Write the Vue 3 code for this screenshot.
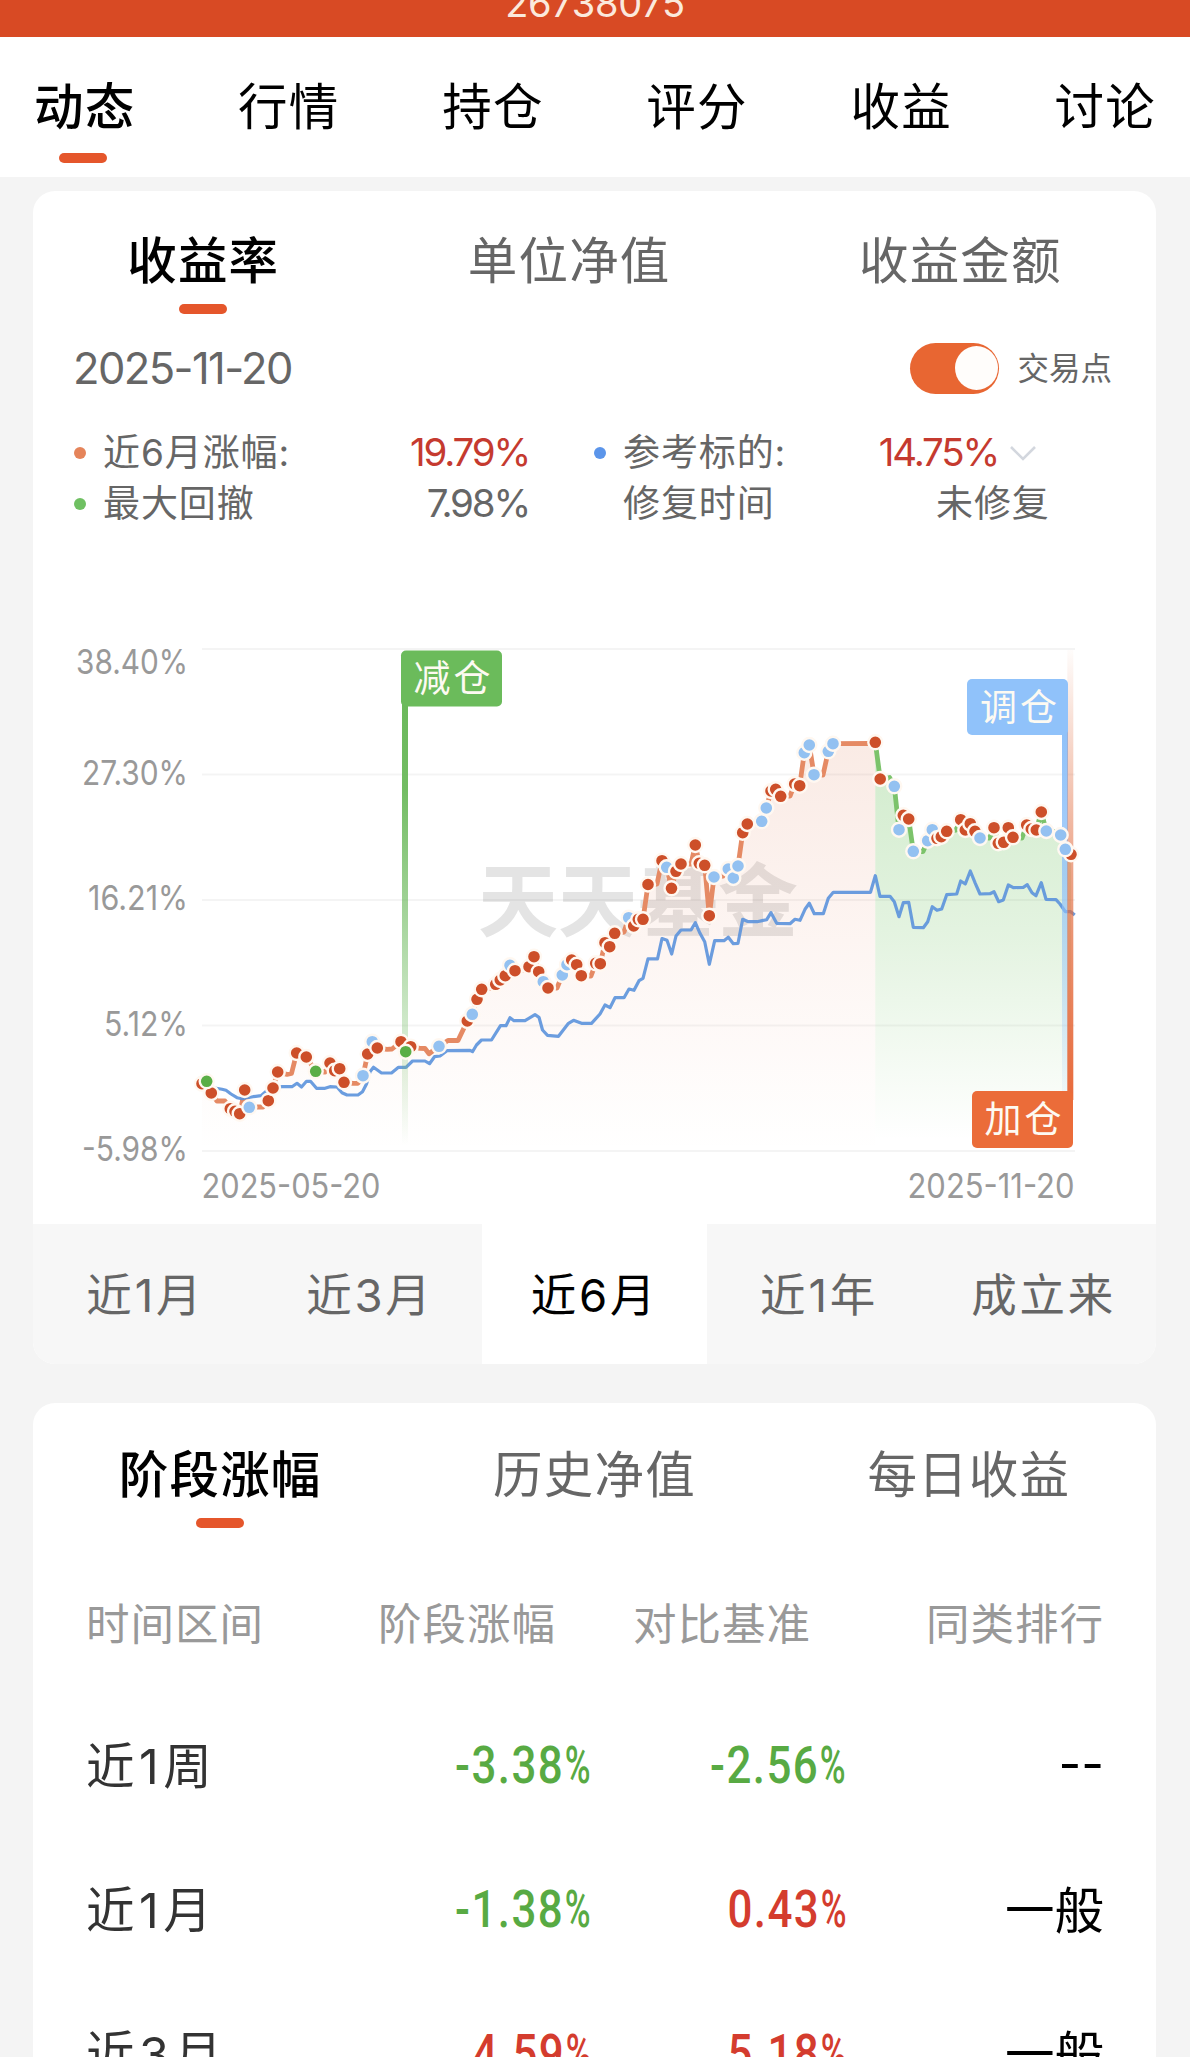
<script setup>
import { ref, computed } from 'vue';

const navItems = ['动态', '行情', '持仓', '评分', '收益', '讨论'];
const activeNav = ref(0);

const chartTabs = ['收益率', '单位净值', '收益金额'];
const activeChartTab = ref(0);

const ranges = ['近1月', '近3月', '近6月', '近1年', '成立来'];
const activeRange = ref(2);

const tableTabs = ['阶段涨幅', '历史净值', '每日收益'];
const activeTableTab = ref(0);

const showTrades = ref(true);

const rows = [
    { name: '近1周', change: '-3.38', base: '-2.56', rank: '--' },
    { name: '近1月', change: '-1.38', base: '0.43', rank: '一般' },
    { name: '近3月', change: '4.59', base: '5.18', rank: '一般' }
];
const tone = (v) => (v.startsWith('-') ? 'down' : 'up');

const ticks = [
    { label: '38.40%', y: 649, x: 76 },
    { label: '27.30%', y: 774.5, x: 82 },
    { label: '16.21%', y: 900, x: 88 },
    { label: '5.12%', y: 1025.5, x: 104 },
    { label: '-5.98%', y: 1151, x: 82 }
];

// fund curve: [x, y, trade type] r = buy, b = switch, g = sell
const curve = [
    [202, 1083.7, 'r'], [206.7, 1081.3, 'g'], [211.3, 1093, 'r'], [217, 1101], [225, 1101],
    [230.3, 1108.7, 'r'], [235, 1111.3, 'r'], [239.7, 1113.7, 'r'], [244.7, 1090, 'r'],
    [249.3, 1107.3, 'b'], [258, 1107], [263, 1107], [268.3, 1100.7, 'r'], [273, 1088, 'r'],
    [277.7, 1072, 'r'], [287, 1074.3], [291.5, 1073.5], [296.7, 1053, 'r'], [306.3, 1057, 'r'],
    [315.7, 1071.3, 'g'], [325, 1072], [330, 1063, 'r'], [334.7, 1070.7, 'r'], [339.7, 1068.7, 'r'],
    [344, 1082.3, 'r'], [353, 1083.3], [358, 1083.3], [363, 1075.7, 'b'], [367.7, 1054, 'r'],
    [372.3, 1041.7, 'b'], [377.3, 1048, 'r'], [387, 1049.3], [392, 1049], [401, 1041.7, 'r'],
    [405.7, 1051.7, 'g'], [410.7, 1046.7, 'r'], [420, 1048.3], [425, 1048.5], [429, 1053.7],
    [439, 1046.3, 'b'], [448, 1040.5], [458, 1040.5], [467.3, 1021, 'r'], [472.3, 1014.3, 'b'],
    [477, 999.3, 'r'], [481.7, 989.3, 'r'], [491, 988], [495.7, 984.3, 'r'], [500.3, 980, 'r'],
    [505.3, 975.7, 'r'], [510, 965.3, 'b'], [515, 970.7, 'r'], [525, 970], [529, 966.7, 'r'],
    [534, 956.7, 'r'], [538.7, 971.7, 'r'], [543.3, 981.7, 'b'], [548, 988, 'r'], [557, 988],
    [562.3, 975, 'b'], [567, 964.7, 'b'], [571.7, 960, 'r'], [576.7, 964.7, 'r'], [581.3, 975.7, 'r'],
    [591, 976], [595.7, 963.3, 'r'], [600.3, 963.7, 'r'], [605, 942.7, 'r'], [609.7, 946.7, 'r'],
    [614.7, 933.3, 'r'], [624, 932], [628.7, 917.7, 'b'], [633.7, 926, 'r'], [638.3, 919.3, 'r'],
    [643, 919.3, 'r'], [648, 884.5, 'r'], [657, 884], [662, 860.7, 'r'], [666.7, 867.3, 'b'],
    [671.5, 888.3, 'r'], [676, 871.3, 'r'], [681, 864, 'r'], [691, 864], [695.3, 845, 'r'],
    [699.3, 863.3, 'r'], [704.7, 865.3, 'r'], [709.3, 915.7, 'r'], [714, 877, 'b'], [723, 876],
    [728.3, 869, 'b'], [733.3, 878, 'b'], [738, 866, 'b'], [742.7, 832.7, 'r'], [747.3, 824, 'r'],
    [757, 823], [761.7, 821.3, 'b'], [766.3, 808, 'b'], [771, 791, 'r'], [775.7, 789.3, 'r'],
    [780.7, 796.3, 'r'], [790, 796], [794.7, 784, 'r'], [799.7, 785.7, 'r'], [804.3, 752.7, 'b'],
    [809.3, 745, 'b'], [814, 774.7, 'b'], [823, 775], [828.3, 751.3, 'b'], [833, 743.7, 'b'],
    [870, 743.5], [875.3, 742.3, 'r'], [880.2, 779, 'r'], [889.5, 777.5], [894.3, 786.3, 'b'],
    [899, 829.7, 'b'], [903.3, 815.3, 'r'], [908.7, 819, 'r'], [913.3, 851.3, 'b'], [923, 851.5],
    [927.7, 840.7, 'b'], [932.3, 829.7, 'b'], [937, 838.3, 'r'], [941.3, 836.7, 'r'],
    [946.7, 831.3, 'r'], [956, 830], [960.7, 819.7, 'r'], [965.3, 830, 'r'], [970.3, 823.7, 'r'],
    [975, 831.3, 'r'], [980, 838, 'b'], [989.5, 838], [994, 827.7, 'r'], [998.3, 843.3, 'r'],
    [1003.7, 842.3, 'r'], [1008.3, 827.7, 'r'], [1013, 837.3, 'r'], [1022, 838], [1026.7, 825, 'r'],
    [1031.3, 829, 'r'], [1036.3, 830, 'r'], [1041.3, 812, 'r'], [1046.3, 831, 'b'], [1056, 832],
    [1071, 854.3, 'r'], [1060.7, 835, 'b'], [1065.3, 849.3, 'b']
];

const benchmark = [
    [202, 1083], [212, 1087.5], [222, 1089.3], [226, 1090.3], [231, 1094], [237, 1097.7], [242, 1098.7],
    [253, 1096.7], [261, 1095.7], [270, 1088], [282, 1086.7], [292, 1086.7], [297, 1083.3], [301.5, 1087],
    [306.5, 1081.3], [310.5, 1081.3], [316.5, 1088.3], [325, 1088.3], [330, 1086.7], [337, 1087],
    [342, 1092.7], [347, 1095], [358, 1095], [362.5, 1091.7], [366.5, 1084], [370, 1071.7], [373.5, 1067.3],
    [381.5, 1073], [391.5, 1073], [398.5, 1067.3], [406, 1067.3], [412.5, 1061], [425, 1061], [429.5, 1063.7],
    [434.5, 1056.7], [440, 1056], [447, 1050.7], [470, 1050.3], [472.5, 1051.7], [476.5, 1045], [481.5, 1040],
    [491.5, 1040], [500.5, 1025.7], [506, 1025.7], [510, 1017.7], [514, 1020.7], [525, 1020.7], [535, 1014.7],
    [539, 1017.3], [542.5, 1030], [547.5, 1035.3], [558.5, 1036.3], [568.5, 1023.3], [573.5, 1020.3],
    [581.5, 1023.3], [591.5, 1023.3], [600, 1014], [605, 1005], [610, 1007.7], [615, 997.7], [624, 997.7],
    [629, 989], [634, 990.3], [639, 980.7], [643, 978.3], [648, 958.8], [657.5, 958.8], [662, 938.5],
    [667, 940.3], [671.7, 954], [676, 936], [681, 930], [691, 930], [695.3, 922.7], [700, 933.3],
    [704.7, 941.7], [709.3, 964.3], [714.7, 940.7], [724, 940.7], [728.3, 937.3], [733.3, 943.7],
    [738, 943.3], [742.7, 919.3], [748.3, 921.7], [757, 921.7], [766.7, 919.7], [771, 912.7], [776.7, 923.3],
    [790, 923.7], [795, 919.3], [800, 920.3], [805, 909.3], [809.3, 903.3], [814.3, 913.7], [823.3, 913.7],
    [828.3, 898.3], [833.3, 892.3], [870.5, 892.3], [875.3, 875.7], [880, 896.3], [890, 896.3],
    [894.3, 901.7], [899, 916.7], [903.3, 902.7], [908.7, 902.3], [913.3, 927.3], [923.3, 927.7],
    [927.7, 921.7], [932.3, 906.7], [937, 910.3], [941.7, 909], [946.7, 894.7], [956.7, 894], [960.7, 881],
    [965.3, 884], [970.3, 871], [975.3, 883.3], [980, 894], [990, 893.7], [994, 891.7], [998.7, 901.7],
    [1003.3, 900], [1008.3, 885], [1013.3, 887.7], [1023.3, 887.3], [1027.3, 884.7], [1032, 892.7],
    [1036, 895.7], [1041.3, 882.7], [1046, 899.3], [1056, 899.7], [1060, 904], [1065.3, 911.7],
    [1070.7, 911.7], [1074.7, 915]
];

const PEAK_X = 875.3;
const BASE_Y = 1151;

const toPath = (pts) => 'M' + pts.map(([x, y]) => `${x} ${y}`).join('L');
const toArea = (pts) => `${toPath(pts)}L${pts[pts.length - 1][0]} ${BASE_Y}L${pts[0][0]} ${BASE_Y}Z`;

const sorted = computed(() => [...curve].sort((a, b) => a[0] - b[0]));
const rise = computed(() => sorted.value.filter((p) => p[0] <= PEAK_X));
const fall = computed(() => sorted.value.filter((p) => p[0] >= PEAK_X));
// sell markers stay on top of their neighbours
const trades = computed(() => {
    const dots = curve.filter((p) => p[2]);
    return [...dots.filter((p) => p[2] !== 'g'), ...dots.filter((p) => p[2] === 'g')];
});
</script>

<template>
    <div class="page">
        <header class="topbar">26738075</header>

        <nav class="nav">
            <div v-for="(item, i) in navItems" :key="item" class="nav-item" :class="{ active: i === activeNav }"
                @click="activeNav = i">
                <span>{{ item }}</span>
                <i class="bar"></i>
            </div>
        </nav>

        <section class="card">
            <div class="tabs">
                <div v-for="(tab, i) in chartTabs" :key="tab" class="tab" :class="{ active: i === activeChartTab }"
                    @click="activeChartTab = i">
                    <span>{{ tab }}</span>
                    <i class="bar"></i>
                </div>
            </div>

            <div class="date-row">
                <span class="date">2025-11-20</span>
                <div class="switch" :class="{ on: showTrades }" @click="showTrades = !showTrades">
                    <i class="knob"></i>
                </div>
                <span class="switch-label">交易点</span>
            </div>

            <div class="legend">
                <i class="dot orange"></i>
                <span class="name">近6月涨幅:</span>
                <span class="num red">19.79%</span>
                <i class="dot blue"></i>
                <span class="name">参考标的:</span>
                <span class="num red">14.75%</span>
                <svg class="chevron" viewBox="0 0 28 16">
                    <path d="M2 2L14 14L26 2" fill="none" stroke="#d3d7de" stroke-width="2.6" />
                </svg>
                <i class="dot green"></i>
                <span class="name">最大回撤</span>
                <span class="num">7.98%</span>
                <i></i>
                <span class="name">修复时间</span>
                <span class="name wide">未修复</span>
            </div>

            <svg class="chart" viewBox="33 624 1123 600">
                <defs>
                    <linearGradient id="riseFill" gradientUnits="userSpaceOnUse" x1="0" y1="742" x2="0" y2="1151">
                        <stop offset="0" stop-color="#dc7850" stop-opacity="0.15" />
                        <stop offset="0.5" stop-color="#e2754c" stop-opacity="0.07" />
                        <stop offset="1" stop-color="#e2754c" stop-opacity="0" />
                    </linearGradient>
                    <linearGradient id="fallFill" gradientUnits="userSpaceOnUse" x1="0" y1="742" x2="0" y2="1140">
                        <stop offset="0" stop-color="#6abf5a" stop-opacity="0.31" />
                        <stop offset="0.5" stop-color="#6abf5a" stop-opacity="0.18" />
                        <stop offset="1" stop-color="#6abf5a" stop-opacity="0" />
                    </linearGradient>
                    <linearGradient id="poleSell" x1="0" y1="0" x2="0" y2="1">
                        <stop offset="0" stop-color="#6bb95b" />
                        <stop offset="0.2" stop-color="#6bb95b" stop-opacity="0.95" />
                        <stop offset="1" stop-color="#6bb95b" stop-opacity="0" />
                    </linearGradient>
                    <linearGradient id="poleSwitch" x1="0" y1="0" x2="0" y2="1">
                        <stop offset="0" stop-color="#8fc1f9" />
                        <stop offset="0.4" stop-color="#8fc1f9" stop-opacity="0.75" />
                        <stop offset="1" stop-color="#8fc1f9" stop-opacity="0.1" />
                    </linearGradient>
                    <linearGradient id="poleBuy" x1="0" y1="0" x2="0" y2="1">
                        <stop offset="0" stop-color="#e06a3c" stop-opacity="0.02" />
                        <stop offset="0.5" stop-color="#e06a3c" stop-opacity="0.62" />
                        <stop offset="1" stop-color="#e8693a" />
                    </linearGradient>
                </defs>

                <text class="watermark" x="478" y="930" textLength="320">天天基金</text>

                <g v-for="t in ticks" :key="t.label">
                    <line x1="202" x2="1075" :y1="t.y" :y2="t.y" stroke="#000" stroke-opacity="0.045" stroke-width="2" />
                    <text class="axis" :x="t.x" :y="t.y === 649 ? 674 : t.y + 10" :textLength="188 - t.x"
                        lengthAdjust="spacingAndGlyphs">{{ t.label }}</text>
                </g>

                <path :d="toArea(rise)" fill="url(#riseFill)" />
                <path :d="toArea(fall)" fill="url(#fallFill)" />
                <path :d="toPath(rise)" class="line" stroke="#e58a64" stroke-width="4.8" />
                <path :d="toPath(fall)" class="line" stroke="#7cc36b" stroke-width="4.8" />
                <path :d="toPath(benchmark)" class="line" stroke="#5b92dc" stroke-width="3.2" stroke-opacity="0.9" />

                <rect x="402" y="700" width="6" height="445" fill="url(#poleSell)" />
                <rect x="1062" y="730" width="6" height="362" fill="url(#poleSwitch)" />
                <rect x="1067.3" y="650" width="6" height="450" fill="url(#poleBuy)" />

                <g v-if="showTrades">
                    <circle v-for="(p, i) in trades" :key="i" :cx="p[0]" :cy="p[1]" r="7" :class="['trade', p[2]]" />
                </g>

                <rect x="401" y="650.5" width="101" height="56" rx="5" fill="#6bbb5b" />
                <text class="flag" x="413.5" y="692" textLength="77">减仓</text>
                <rect x="967" y="679" width="101" height="56" rx="5" fill="#90c2fa" />
                <text class="flag" x="980" y="721" textLength="77">调仓</text>
                <rect x="972" y="1091" width="101" height="57" rx="5" fill="#eb6c39" />
                <text class="flag" x="984.5" y="1133" textLength="77">加仓</text>

                <text class="axis" x="201.5" y="1198" textLength="179" lengthAdjust="spacingAndGlyphs">2025-05-20</text>
                <text class="axis" x="907.5" y="1198" textLength="167" lengthAdjust="spacingAndGlyphs">2025-11-20</text>
            </svg>

            <div class="ranges">
                <div v-for="(r, i) in ranges" :key="r" class="range" :class="{ active: i === activeRange }"
                    @click="activeRange = i">{{ r }}</div>
            </div>
        </section>

        <section class="card second">
            <div class="tabs">
                <div v-for="(tab, i) in tableTabs" :key="tab" class="tab" :class="{ active: i === activeTableTab }"
                    @click="activeTableTab = i">
                    <span>{{ tab }}</span>
                    <i class="bar"></i>
                </div>
            </div>

            <div class="table-row head">
                <span>时间区间</span>
                <span>阶段涨幅</span>
                <span>对比基准</span>
                <span>同类排行</span>
            </div>
            <div v-for="row in rows" :key="row.name" class="table-row">
                <span class="period">{{ row.name }}</span>
                <span class="figure" :class="tone(row.change)">{{ row.change }}<small>%</small></span>
                <span class="figure" :class="tone(row.base)">{{ row.base }}<small>%</small></span>
                <span class="rank">{{ row.rank }}</span>
            </div>
        </section>
    </div>
</template>

<style>
body {
    margin: 0;
    background: #f4f4f4;
}
</style>

<style scoped>
.page {
    width: 1190px;
    height: 2057px;
    overflow: hidden;
    background: #f4f4f4;
    color: #666;
    font-family: Inter, "Noto Sans CJK SC", sans-serif;
}

.topbar {
    height: 37px;
    overflow: hidden;
    background: #d84a24;
    color: #fbe9dc;
    font-size: 38px;
    line-height: 6px;
    letter-spacing: -0.3px;
    text-align: center;
}

.nav {
    display: flex;
    justify-content: space-between;
    height: 140px;
    padding: 0 34px;
    box-sizing: border-box;
    background: #fff;
}

.nav-item,
.tab {
    display: flex;
    flex-direction: column;
    align-items: center;
    font-size: 49.5px;
    line-height: 60px;
    letter-spacing: 1.2px;
}

.nav-item {
    padding-top: 40px;
    color: #000;
}

.bar {
    width: 48px;
    height: 10px;
    border-radius: 5px;
}

.nav-item .bar {
    margin-top: 16px;
    margin-right: 3px;
}

.active .bar {
    background: #e5562b;
}

.nav-item.active,
.tab.active {
    color: #000;
    font-weight: 500;
}

.card {
    width: 1123px;
    margin: 14px 0 0 33px;
    border-radius: 22px;
    overflow: hidden;
    background: #fff;
}

.card.second {
    height: 700px;
    margin-top: 39px;
}

.tabs {
    display: flex;
    justify-content: space-around;
    height: 140px;
    padding-top: 40px;
    box-sizing: border-box;
}

.second .tabs {
    padding-top: 42px;
}

.tab .bar {
    margin-top: 13px;
    margin-right: 1px;
}

.date-row {
    display: flex;
    align-items: center;
    height: 74px;
    padding: 0 44px 0 40px;
}

.date {
    flex: 1;
    font-size: 43.5px;
    letter-spacing: -1.6px;
}

.switch {
    display: flex;
    align-items: center;
    width: 89px;
    height: 51px;
    padding: 0 1px;
    box-sizing: border-box;
    border-radius: 26px;
    background: #ccc;
}

.switch.on {
    justify-content: flex-end;
    background: #e86632;
}

.knob {
    width: 43px;
    height: 44px;
    border-radius: 50%;
    background: #fffdfb;
}

.switch-label {
    margin-left: 18px;
    padding-bottom: 4px;
    font-size: 31.5px;
}

.legend {
    display: grid;
    grid-template-columns: 29px 255px 171px 94px 210px 165px 1fr;
    grid-template-rows: 51px 51px;
    align-items: center;
    height: 219px;
    padding: 22px 0 0 41px;
    box-sizing: border-box;
    font-size: 37px;
    line-height: 51px;
}

.dot {
    width: 12px;
    height: 12px;
    border-radius: 50%;
}

.dot.orange {
    background: #e5845a;
}

.dot.blue {
    justify-self: end;
    margin-right: 17px;
    background: #5b95ea;
}

.dot.green {
    background: #6fc062;
}

.name {
    letter-spacing: 0.9px;
}

.name.wide {
    grid-column: span 2;
    padding-left: 103px;
}

.num {
    justify-self: end;
    font-size: 38.5px;
    letter-spacing: -2.2px;
}

.red {
    color: #c53a2f;
}

.chevron {
    width: 28px;
    height: 16px;
    margin-left: 11px;
}

.chart {
    display: block;
    width: 1123px;
    height: 600px;
}

.line {
    fill: none;
    stroke-linejoin: round;
}

.watermark {
    font-family: "Noto Sans CJK SC", sans-serif;
    font-size: 80px;
    font-weight: 700;
    fill: #e4e4e4;
}

.axis {
    font-size: 34px;
    fill: #999;
}

.flag {
    font-size: 37px;
    fill: #fdfaf2;
}

.trade {
    stroke: #fff8f1;
    stroke-width: 2.4px;
}

.trade.r {
    fill: #cd4f29;
}

.trade.b {
    fill: #93c1f1;
}

.trade.g {
    fill: #5aae46;
}

.ranges {
    display: flex;
    height: 140px;
    background: #f7f7f7;
}

.range {
    flex: 1;
    font-size: 45.5px;
    line-height: 143px;
    letter-spacing: 2.8px;
    text-align: center;
}

.range.active {
    background: #fff;
    color: #000;
}

.table-row {
    display: grid;
    grid-template-columns: 300px 205px 255px 1fr;
    align-items: center;
    height: 144px;
    padding: 0 52px 0 53px;
    white-space: nowrap;
}

.table-row > :not(:first-child) {
    justify-self: end;
}

.table-row.head {
    height: 148px;
    padding-top: 14px;
    box-sizing: border-box;
    color: #999;
    font-size: 43.5px;
    letter-spacing: 1px;
    line-height: 60px;
}

.table-row.head > :nth-child(2),
.table-row.head > :nth-child(3) {
    margin-right: 35px;
}

.period {
    color: #333;
    font-size: 48.5px;
    letter-spacing: 4.5px;
}

.figure {
    padding-top: 4px;
    font-family: Roboto, sans-serif;
    font-size: 51px;
    font-weight: 500;
    letter-spacing: 1.7px;
    transform: scaleX(0.86);
    transform-origin: right;
}

.figure small {
    display: inline-block;
    margin-left: -7px;
    font-size: 51px;
    font-weight: 500;
    letter-spacing: 0;
    transform: scaleX(0.8);
    transform-origin: right;
}

.up {
    color: #d43c2e;
}

.down {
    color: #58aa43;
}

.rank {
    color: #000;
    font-size: 49.5px;
}
</style>
